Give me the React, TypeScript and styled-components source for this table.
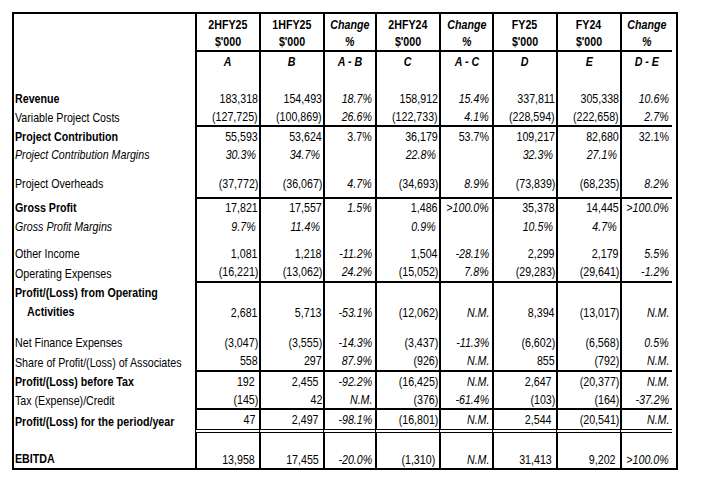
import React, { FC } from "react";
import styled, { createGlobalStyle } from "styled-components";

type LabelKind = "plain" | "bold" | "italic";
type Origin = "left" | "right" | "center";

interface Line {
  label?: string[];
  kind?: LabelKind;
  indent?: boolean;
  values?: string[];
  height: number;
  pb?: number;
  line?: "single" | "double";
  upright?: boolean;
  bottom?: boolean;
  // "_)" style spacing on positive numbers, or on every number
  spaced?: "positive" | "all";
}

const CHANGE_COLS = [2, 4, 7];

const HEADS = [
  { top: "2HFY25", sub: "$'000", key: "A" },
  { top: "1HFY25", sub: "$'000", key: "B" },
  { top: "Change", sub: "%", key: "A - B", change: true },
  { top: "2HFY24", sub: "$'000", key: "C" },
  { top: "Change", sub: "%", key: "A - C", change: true },
  { top: "FY25", sub: "$'000", key: "D" },
  { top: "FY24", sub: "$'000", key: "E" },
  { top: "Change", sub: "%", key: "D - E", change: true },
];

const LINES: Line[] = [
  { height: 17 },
  {
    label: ["Revenue"],
    kind: "bold",
    height: 19,
    values: ["183,318", "154,493", "18.7%", "158,912", "15.4%", "337,811", "305,338", "10.6%"],
  },
  {
    label: ["Variable Project Costs"],
    height: 19,
    line: "single",
    values: ["(127,725)", "(100,869)", "26.6%", "(122,733)", "4.1%", "(228,594)", "(222,658)", "2.7%"],
  },
  {
    label: ["Project Contribution"],
    kind: "bold",
    height: 18,
    upright: true,
    values: ["55,593", "53,624", "3.7%", "36,179", "53.7%", "109,217", "82,680", "32.1%"],
  },
  {
    label: ["Project Contribution Margins"],
    kind: "italic",
    height: 18,
    values: ["30.3%", "34.7%", "", "22.8%", "", "32.3%", "27.1%", ""],
  },
  { height: 11 },
  {
    label: ["Project Overheads"],
    height: 24,
    pb: 4,
    line: "single",
    values: ["(37,772)", "(36,067)", "4.7%", "(34,693)", "8.9%", "(73,839)", "(68,235)", "8.2%"],
  },
  {
    label: ["Gross Profit"],
    kind: "bold",
    height: 19,
    values: ["17,821", "17,557", "1.5%", "1,486", ">100.0%", "35,378", "14,445", ">100.0%"],
  },
  {
    label: ["Gross Profit Margins"],
    kind: "italic",
    height: 19,
    values: ["9.7%", "11.4%", "", "0.9%", "", "10.5%", "4.7%", ""],
  },
  { height: 8 },
  {
    label: ["Other Income"],
    height: 19,
    values: ["1,081", "1,218", "-11.2%", "1,504", "-28.1%", "2,299", "2,179", "5.5%"],
  },
  {
    label: ["Operating Expenses"],
    height: 20,
    line: "single",
    values: ["(16,221)", "(13,062)", "24.2%", "(15,052)", "7.8%", "(29,283)", "(29,641)", "-1.2%"],
  },
  {
    label: ["Profit/(Loss) from Operating", "Activities"],
    kind: "bold",
    indent: true,
    height: 38,
    bottom: true,
    values: ["2,681", "5,713", "-53.1%", "(12,062)", "N.M.", "8,394", "(13,017)", "N.M."],
  },
  { height: 12 },
  {
    label: ["Net Finance Expenses"],
    height: 19,
    values: ["(3,047)", "(3,555)", "-14.3%", "(3,437)", "-11.3%", "(6,602)", "(6,568)", "0.5%"],
  },
  {
    label: ["Share of Profit/(Loss) of Associates"],
    height: 20,
    line: "single",
    values: ["558", "297", "87.9%", "(926)", "N.M.", "855", "(792)", "N.M."],
  },
  {
    label: ["Profit/(Loss) before Tax"],
    kind: "bold",
    height: 19,
    spaced: "positive",
    values: ["192", "2,455", "-92.2%", "(16,425)", "N.M.", "2,647", "(20,377)", "N.M."],
  },
  {
    label: ["Tax (Expense)/Credit"],
    height: 19,
    line: "single",
    values: ["(145)", "42", "N.M.", "(376)", "-61.4%", "(103)", "(164)", "-37.2%"],
  },
  {
    label: ["Profit/(Loss) for the period/year"],
    kind: "bold",
    height: 23,
    line: "double",
    spaced: "positive",
    values: ["47", "2,497", "-98.1%", "(16,801)", "N.M.", "2,544", "(20,541)", "N.M."],
  },
  {
    label: ["EBITDA"],
    kind: "bold",
    height: 35,
    bottom: true,
    spaced: "all",
    values: ["13,958", "17,455", "-20.0%", "(1,310)", "N.M.", "31,413", "9,202", ">100.0%"],
  },
];

const isPercent = (v: string) => v.endsWith("%") || v === "N.M.";

const rightPad = (v: string, row: Line) => {
  if (isPercent(v)) return 3;
  if (row.spaced === "all") return 4;
  if (row.spaced === "positive" && !v.startsWith("(")) return 4;
  return 1;
};

const ResultsRow: FC<{ row: Line }> = ({ row }) => {
  const values = row.values || ["", "", "", "", "", "", "", ""];
  return (
    <Row $h={row.height}>
      <LabelCell
        $kind={row.kind || "plain"}
        $bottom={!!row.bottom}
        $pb={row.pb || 0}
      >
        {(row.label || []).map((text, i) => (
          <LabelLine key={i} $indent={!!row.indent && i > 0}>
            <Narrow $origin="left">{text}</Narrow>
          </LabelLine>
        ))}
      </LabelCell>
      {values.map((v, i) => {
        const italic =
          row.kind === "italic" || (CHANGE_COLS.includes(i) && !row.upright);
        return (
          <ValueCell
            key={i}
            $line={row.line}
            $pb={row.pb || 0}
            $bottom={!!row.bottom}
            $italic={italic}
            $pr={rightPad(v, row)}
          >
            {v && <Narrow $origin="right">{v}</Narrow>}
          </ValueCell>
        );
      })}
    </Row>
  );
};

export default function App() {
  return (
    <>
      <GlobalStyle />
      <Table>
        <Row $h={37}>
          <LabelCell $kind="plain" $bottom={false} $pb={0} />
          {HEADS.map((h, i) => (
            <HeadCell key={i} $italic={!!h.change}>
              <Narrow $origin="center">{h.top}</Narrow>
              <Narrow $origin="center">{h.sub}</Narrow>
            </HeadCell>
          ))}
        </Row>
        <Row $h={21}>
          <LabelCell $kind="plain" $bottom={false} $pb={0} />
          {HEADS.map((h, i) => (
            <KeyCell key={i}>
              <Narrow $origin="center">{h.key}</Narrow>
            </KeyCell>
          ))}
        </Row>
        {LINES.map((row, i) => (
          <ResultsRow key={i} row={row} />
        ))}
      </Table>
    </>
  );
}

const GlobalStyle = createGlobalStyle`
  body {
    margin: 0;
    background: #fff;
    color: #000;
    font-family: "Liberation Sans Narrow", "Liberation Sans", Arial, sans-serif;
    font-size: 13px;
  }
`;

const Table = styled.div`
  margin: 12px 0 0 12px;
  width: 662px;
  border: 2px solid #000;
  display: flex;
  flex-direction: column;
`;

const Row = styled.div<{ $h: number }>`
  display: grid;
  grid-template-columns: 181px 64px 64px 52px 64px 53px 64px 64px 52px;
  height: ${(p) => p.$h}px;
`;

/* Arial Narrow is not available, so regular Liberation Sans is squeezed */
const Narrow = styled.span<{ $origin: Origin }>`
  display: inline-block;
  white-space: nowrap;
  transform: scaleX(0.82);
  transform-origin: ${(p) => p.$origin} center;
`;

const LabelCell = styled.div<{ $kind: LabelKind; $bottom: boolean; $pb: number }>`
  display: flex;
  flex-direction: column;
  padding-left: 1px;
  padding-bottom: ${(p) => p.$pb + (p.$pb ? 2 : 0)}px;
  font-weight: ${(p) => (p.$kind === "bold" ? 700 : 400)};
  font-style: ${(p) => (p.$kind === "italic" ? "italic" : "normal")};
  justify-content: ${(p) => (p.$bottom ? "flex-end" : "center")};
  white-space: nowrap;
`;

const LabelLine = styled.div<{ $indent: boolean }>`
  line-height: 19px;
  padding-left: ${(p) => (p.$indent ? 12 : 0)}px;
`;

const ValueCell = styled.div<{
  $line?: "single" | "double";
  $pb: number;
  $bottom: boolean;
  $italic: boolean;
  $pr: number;
}>`
  display: flex;
  justify-content: flex-end;
  align-items: ${(p) => (p.$bottom ? "flex-end" : "center")};
  border-left: 2px solid #000;
  border-bottom: ${(p) =>
    p.$line === "double"
      ? "4px double #000"
      : p.$line === "single"
      ? "2px solid #000"
      : "none"};
  padding-right: ${(p) => p.$pr}px;
  padding-bottom: ${(p) => p.$pb}px;
  line-height: 16px;
  font-style: ${(p) => (p.$italic ? "italic" : "normal")};
  white-space: nowrap;
`;

const HeadCell = styled.div<{ $italic: boolean }>`
  display: flex;
  flex-direction: column;
  align-items: center;
  padding-top: 2px;
  border-left: 2px solid #000;
  border-bottom: 2px solid #000;
  font-weight: 700;
  font-style: ${(p) => (p.$italic ? "italic" : "normal")};
  line-height: 17px;
`;

const KeyCell = styled.div`
  display: flex;
  justify-content: center;
  align-items: center;
  border-left: 2px solid #000;
  font-weight: 700;
  font-style: italic;
`;
